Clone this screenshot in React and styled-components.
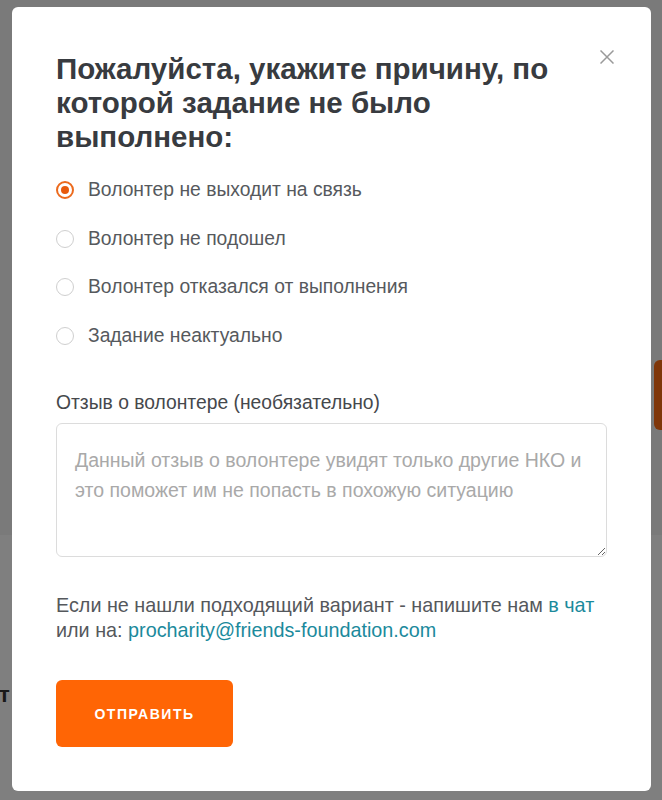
import React, { useState } from "react";
import styled, { createGlobalStyle } from "styled-components";

const GlobalStyle = createGlobalStyle`
    html, body {
        margin: 0;
        padding: 0;
        font-family: "Liberation Sans", Arial, sans-serif;
    }
`

// страница под затемнением
const PageStyle = styled.div`
    width: 662px;
    height: 800px;
    display: flex;
    flex-direction: column;
    overflow: hidden;
`

const PageTopStyle = styled.div`
    height: 535px;
    background-color: #f4f4f4;
    display: flex;
    justify-content: flex-end;
    align-items: flex-start;
    padding-top: 360px;
    box-sizing: border-box;
`

const PageButtonStyle = styled.div`
    width: 40px;
    height: 70px;
    margin-right: -32px;
    border-radius: 6px;
    background-color: #ff6d12;
`

const PageBottomStyle = styled.div`
    flex: 1;
    background-color: #ffffff;
    padding-top: 147px;
`

const PageHeadingStyle = styled.div`
    font-size: 22px;
    font-weight: 700;
    color: #333;
    margin-left: -1px;
`

// затемнение и окно
const OverlayStyle = styled.div`
    position: fixed;
    inset: 0;
    background-color: rgba(0, 0, 0, 0.5);
    display: flex;
    align-items: flex-start;
    padding: 7px 0 0 12px;
`

const ModalStyle = styled.div`
    position: relative;
    width: 639px;
    box-sizing: border-box;
    padding: 45px 44px 44px;
    background-color: #fff;
    border-radius: 6px;
    display: flex;
    flex-direction: column;
`

const CloseStyle = styled.button`
    position: absolute;
    top: 43px;
    right: 37px;
    width: 14px;
    height: 14px;
    padding: 0;
    border: 0;
    background: none;
    display: flex;
    cursor: pointer;
`

const TitleStyle = styled.h2`
    margin: 0 0 24px;
    font-size: 29.5px;
    line-height: 34px;
    font-weight: 700;
    color: #383b40;
    padding-right: 40px;
`

const RadioListStyle = styled.div`
    display: flex;
    flex-direction: column;
    gap: 24.5px;
`

const RadioRowStyle = styled.label`
    display: flex;
    align-items: center;
    gap: 14px;
    height: 24px;
    font-size: 19.3px;
    line-height: 24px;
    color: #56595d;
    cursor: pointer;
`

const RadioCircleStyle = styled.span`
    width: 18px;
    height: 18px;
    box-sizing: border-box;
    border-radius: 50%;
    border: ${props => props.checked ? '2px solid #ec6a1d' : '1px solid #cfcfcf'};
    display: flex;
    align-items: center;
    justify-content: center;
    flex-shrink: 0;
    &::after {
        content: "";
        width: 8px;
        height: 8px;
        border-radius: 50%;
        background-color: #e85a0c;
        display: ${props => props.checked ? 'block' : 'none'};
    }
`

const LabelStyle = styled.div`
    margin-top: 43.5px;
    font-size: 19.3px;
    line-height: 24px;
    color: #45484c;
`

const TextAreaStyle = styled.textarea`
    margin-top: 8px;
    height: 134px;
    box-sizing: border-box;
    padding: 21px 14px 21px 18px;
    border: 1px solid #dcdcdc;
    border-radius: 6px;
    font-family: "Liberation Sans", Arial, sans-serif;
    font-size: 19.5px;
    line-height: 30px;
    color: #333;
    resize: vertical;
    outline: none;
    &::placeholder {
        color: #a9a9a9;
    }
`

const HintStyle = styled.p`
    margin: 36px 0 0;
    font-size: 19.8px;
    line-height: 25px;
    color: #55585c;
`

const LinkStyle = styled.a`
    color: #1b8a9c;
    text-decoration: none;
`

const SubmitStyle = styled.button`
    margin-top: 37px;
    width: 177px;
    height: 67px;
    border: 0;
    border-radius: 6px;
    background-color: #ff6505;
    color: #fff;
    font-family: "Liberation Sans", Arial, sans-serif;
    font-size: 14px;
    font-weight: 700;
    letter-spacing: 1.5px;
    cursor: pointer;
`

const reasons = [
    "Волонтер не выходит на связь",
    "Волонтер не подошел",
    "Волонтер отказался от выполнения",
    "Задание неактуально",
]

export default function App() {
    const [reason, setReason] = useState(0);
    return (
        <>
            <GlobalStyle />
            <PageStyle>
                <PageTopStyle>
                    <PageButtonStyle />
                </PageTopStyle>
                <PageBottomStyle>
                    <PageHeadingStyle>т</PageHeadingStyle>
                </PageBottomStyle>
            </PageStyle>
            <OverlayStyle>
                <ModalStyle>
                    <CloseStyle aria-label="Закрыть">
                        <svg width="14" height="14" viewBox="0 0 14 14">
                            <path d="M0.5 0.5 L13.5 13.5 M13.5 0.5 L0.5 13.5" stroke="#9a9a9a" strokeWidth="1.5" fill="none" />
                        </svg>
                    </CloseStyle>
                    <TitleStyle>Пожалуйста, укажите причину, по которой задание не было выполнено:</TitleStyle>
                    <RadioListStyle>
                        {reasons.map((text, i) => (
                            <RadioRowStyle key={text} onClick={() => setReason(i)}>
                                <RadioCircleStyle checked={reason === i} />
                                {text}
                            </RadioRowStyle>
                        ))}
                    </RadioListStyle>
                    <LabelStyle>Отзыв о волонтере (необязательно)</LabelStyle>
                    <TextAreaStyle placeholder="Данный отзыв о волонтере увидят только другие НКО и это поможет им не попасть в похожую ситуацию" />
                    <HintStyle>
                        Если не нашли подходящий вариант - напишите нам <LinkStyle href="#">в чат</LinkStyle>
                        <br />
                        или на: <LinkStyle href="#">procharity@friends-foundation.com</LinkStyle>
                    </HintStyle>
                    <SubmitStyle>ОТПРАВИТЬ</SubmitStyle>
                </ModalStyle>
            </OverlayStyle>
        </>
    );
}
